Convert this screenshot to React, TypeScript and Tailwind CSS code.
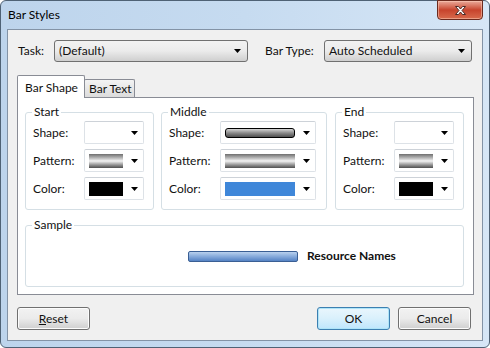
import React from "react";

const font = { fontFamily: 'Lato, "Noto Sans", sans-serif' };

function Arrow() {
  return (
    <svg width="7" height="4" viewBox="0 0 7 4" className="shrink-0">
      <path d="M0 0h7L3.5 4z" fill="#000" />
    </svg>
  );
}

function Dropdown({ text, width }: { text: string; width: string }) {
  return (
    <div
      className={`${width} h-[22px] flex items-center justify-between pl-[4px] pr-[6px] rounded-[3px] border border-[#707070] bg-gradient-to-b from-[#f2f2f2] via-[#ebebeb] to-[#cfcfcf]`}
    >
      <span className="text-[12px] text-[#111] whitespace-nowrap">{text}</span>
      <Arrow />
    </div>
  );
}

type Swatch = "none" | "pattern" | "black" | "shape" | "blue";

function Combo({ swatch, width, swatchW }: { swatch: Swatch; width: string; swatchW: string }) {
  let inner: React.ReactNode = <div className={swatchW} />;
  if (swatch === "pattern")
    inner = <div className={`${swatchW} h-[14px] bg-gradient-to-b from-[#6f6f6f] via-[#f4f4f4] to-[#4f4f4f]`} />;
  if (swatch === "black") inner = <div className={`${swatchW} h-[14px] bg-black`} />;
  if (swatch === "blue") inner = <div className={`${swatchW} h-[14px] bg-[#3f87d9]`} />;
  if (swatch === "shape")
    inner = (
      <div
        className={`${swatchW} h-[10px] rounded-[3px] border border-black bg-gradient-to-b from-[#d6d6d6] via-[#8a8a8a] to-[#4f4f4f]`}
      />
    );
  return (
    <div
      className={`${width} h-[23px] flex items-center justify-between pl-[4px] pr-[5px] rounded-[2px] border border-[#dde2e7] border-t-[#cdd2d8] bg-white`}
    >
      {inner}
      <Arrow />
    </div>
  );
}

function Group({
  title,
  width,
  labelW,
  comboW,
  swatchW,
  rows,
  className,
}: {
  title: string;
  width: string;
  labelW: string;
  comboW: string;
  swatchW: string;
  rows: [string, Swatch][];
  className: string;
}) {
  return (
    <div className={`relative ${width} h-[98px] rounded-[3px] border border-[#d5dfe5] ${className}`}>
      <span className="absolute -top-[9px] left-[6px] px-[2px] bg-white text-[12px] leading-[16px] text-[#111]">
        {title}
      </span>
      <div className="flex flex-col pl-[7px] pt-[8px] gap-[5px]">
        {rows.map(([label, sw]) => (
          <div key={label} className="flex items-center">
            <span className={`${labelW} text-[12px] text-[#111]`}>{label}</span>
            <Combo swatch={sw} width={comboW} swatchW={swatchW} />
          </div>
        ))}
      </div>
    </div>
  );
}

function Button({ children, primary }: { children: React.ReactNode; primary?: boolean }) {
  return (
    <div
      className={`w-[73px] h-[23px] flex items-center justify-center rounded-[3px] border text-[12px] text-[#111] ${
        primary
          ? "border-[#3c7fb1] bg-gradient-to-b from-[#eaf6fd] via-[#d9f0fc] to-[#bee6fd] shadow-[inset_0_0_0_1px_#aee4f8]"
          : "border-[#707070] bg-gradient-to-b from-[#f2f2f2] via-[#ebebeb] to-[#cfcfcf] shadow-[inset_0_0_0_1px_#fcfcfc]"
      }`}
    >
      {children}
    </div>
  );
}

export default function App() {
  return (
    <div style={font} className="w-[490px] h-[348px] bg-white">
      <div className="relative w-[490px] h-[348px] rounded-[6px] border border-[#4f6275] bg-gradient-to-r from-[#bdd4ec] via-[#c6dbf0] to-[#d6e6f6]">
        {/* title bar */}
        <div className="h-[28px] flex items-center pl-[7px] text-[12px] text-black">Bar Styles</div>
        <div className="absolute -top-px right-[6px] w-[46px] h-[20px] flex items-center justify-center rounded-b-[4px] border border-[#6b2a1e] bg-gradient-to-b from-[#e9a99a] via-[#c7432c] to-[#d86a4c] shadow-[inset_0_0_0_1px_rgba(255,210,190,0.5)]">
          <svg width="13" height="11" viewBox="0 0 13 11">
            <path
              d="M1.5 1.5h3l2 2.5 2-2.5h3l-3.5 4 3.5 4h-3l-2-2.5-2 2.5h-3l3.5-4z"
              fill="#fff"
              stroke="#4a2a26"
              strokeWidth="1"
              strokeLinejoin="round"
            />
          </svg>
        </div>

        {/* client area */}
        <div className="ml-[6px] w-[476px] h-[312px] border border-[#8393a6] bg-[#f0f0f0]">
          {/* task row */}
          <div className="flex items-center mt-[10px] ml-[10px]">
            <span className="w-[36px] text-[12px] text-[#111]">Task:</span>
            <Dropdown text="(Default)" width="w-[194px]" />
            <span className="ml-[17px] w-[59px] text-[12px] text-[#111]">Bar Type:</span>
            <Dropdown text="Auto Scheduled" width="w-[148px]" />
          </div>

          {/* tabs */}
          <div className="ml-[9px] mt-[13px] flex items-end h-[22px]">
            <div className="relative z-10 w-[68px] h-[23px] -mb-px pl-[7px] pt-[3px] border border-b-0 border-[#898c95] bg-white text-[12px] text-[#111] whitespace-nowrap rounded-t-[2px]">
              Bar Shape
            </div>
            <div className="-ml-px w-[51px] h-[18px] pl-[4px] border border-b-0 border-[#898c95] bg-gradient-to-b from-[#f3f3f3] to-[#dcdcdc] text-[12px] leading-[18px] text-[#111] whitespace-nowrap rounded-t-[2px]">
              Bar Text
            </div>
          </div>
          <div className="ml-[9px] w-[457px] h-[198px] border border-[#898c95] bg-white">
            <div className="flex mt-[14px]">
              <Group
                title="Start"
                width="w-[129px]"
                labelW="w-[51px]"
                comboW="w-[60px]"
                swatchW="w-[34px]"
                className="ml-[7px]"
                rows={[
                  ["Shape:", "none"],
                  ["Pattern:", "pattern"],
                  ["Color:", "black"],
                ]}
              />
              <Group
                title="Middle"
                width="w-[166px]"
                labelW="w-[51px]"
                comboW="w-[96px]"
                swatchW="w-[70px]"
                className="ml-[7px]"
                rows={[
                  ["Shape:", "shape"],
                  ["Pattern:", "pattern"],
                  ["Color:", "blue"],
                ]}
              />
              <Group
                title="End"
                width="w-[129px]"
                labelW="w-[51px]"
                comboW="w-[60px]"
                swatchW="w-[34px]"
                className="ml-[8px]"
                rows={[
                  ["Shape:", "none"],
                  ["Pattern:", "pattern"],
                  ["Color:", "black"],
                ]}
              />
            </div>
            <div className="relative ml-[7px] mt-[15px] w-[439px] h-[62px] rounded-[3px] border border-[#d5dfe5]">
              <span className="absolute -top-[9px] left-[6px] px-[2px] bg-white text-[12px] leading-[16px] text-[#111]">
                Sample
              </span>
              <div className="h-full flex items-center pl-[162px]">
                <div className="w-[110px] h-[11px] rounded-[2px] border border-[#3a5f94] bg-gradient-to-b from-[#b9d1ee] via-[#86aadb] to-[#5583c4]" />
                <span className="ml-[9px] text-[12px] font-bold text-[#111] whitespace-nowrap">Resource Names</span>
              </div>
            </div>
          </div>

          {/* buttons */}
          <div className="flex mt-[12px] ml-[9px]">
            <Button>
              <span>
                <span className="underline">R</span>eset
              </span>
            </Button>
            <div className="ml-[227px]">
              <Button primary>OK</Button>
            </div>
            <div className="ml-[8px]">
              <Button>Cancel</Button>
            </div>
          </div>
        </div>
      </div>
    </div>
  );
}
